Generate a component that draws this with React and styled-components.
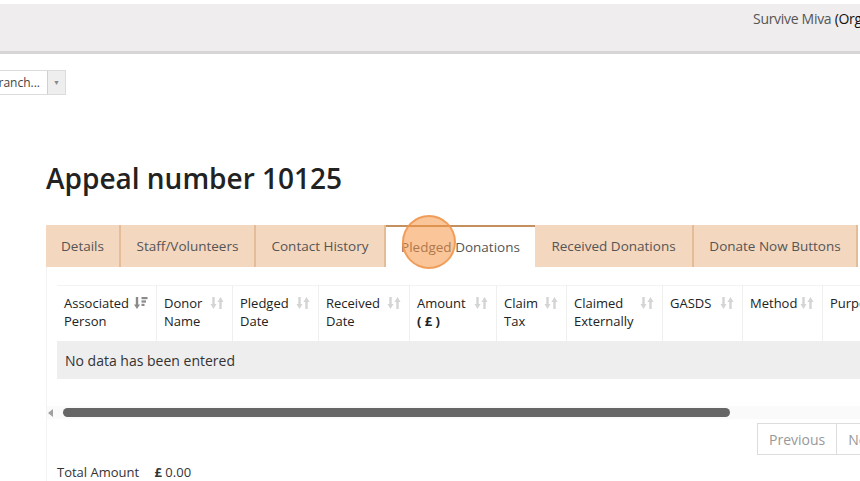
import styled, { createGlobalStyle } from "styled-components";

const GlobalStyle = createGlobalStyle`
    body {
        margin: 0;
        overflow: hidden;
        background: #fff;
        font-family: "Open Sans", "Liberation Sans", sans-serif;
        color: #333;
    }
`;

const columns = [
    { label: ["Associated", "Person"], width: 99, active: true },
    { label: ["Donor", "Name"], width: 75 },
    { label: ["Pledged", "Date"], width: 85 },
    { label: ["Received", "Date"], width: 90 },
    { label: ["Amount", "( £ )"], width: 86, bold: true },
    { label: ["Claim", "Tax"], width: 69 },
    { label: ["Claimed", "Externally"], width: 95 },
    { label: ["GASDS"], width: 79 },
    { label: ["Method"], width: 79 },
    { label: ["Purpose"], width: 89 },
];

const tabs = [
    { label: "Details", width: 75 },
    { label: "Staff/Volunteers", width: 135 },
    { label: "Contact History", width: 130 },
    { label: "Pledged Donations", width: 149, active: true },
    { label: "Received Donations", width: 159 },
    { label: "Donate Now Buttons", width: 164 },
];

const SortIcon = ({ active }) =>
    active ? (
        <svg width="14" height="14" viewBox="0 0 14 14">
            <path d="M3 1v9" stroke="#8a8a8a" strokeWidth="2.4" />
            <path d="M0 8.5h6L3 13z" fill="#8a8a8a" />
            <rect x="7.5" y="1" width="6" height="2.2" fill="#8a8a8a" />
            <rect x="7.5" y="4.4" width="4.5" height="2.2" fill="#8a8a8a" />
            <rect x="7.5" y="7.8" width="3" height="2.2" fill="#8a8a8a" />
        </svg>
    ) : (
        <svg width="14" height="14" viewBox="0 0 14 14">
            <path d="M3.5 1v8" stroke="#d4d4d4" strokeWidth="2.4" />
            <path d="M0.5 8h6l-3 5z" fill="#d4d4d4" />
            <path d="M10.5 13V5" stroke="#d4d4d4" strokeWidth="2.4" />
            <path d="M7.5 6h6l-3-5z" fill="#d4d4d4" />
        </svg>
    );

const App = () => {
    return (
        <>
            <GlobalStyle />
            <Header>
                <UserName>
                    Survive Miva <strong>(Organisation)</strong>
                </UserName>
            </Header>

            <BranchSelect>
                <SelectText>Select Branch...</SelectText>
                <SelectArrow>▼</SelectArrow>
            </BranchSelect>

            <Main>
                <Title>Appeal number 10125</Title>

                <TabBar>
                    {tabs.map((t) => (
                        <Tab key={t.label} $active={t.active} $width={t.width}>
                            {t.label}
                            {t.active && <ClickMarker />}
                        </Tab>
                    ))}
                </TabBar>

                <Panel>
                    <TableWrap>
                        <Table>
                            <thead>
                                <tr>
                                    {columns.map((c) => (
                                        <Th key={c.label[0]} $width={c.width}>
                                            <HeadCell>
                                                <span>
                                                    {c.label[0]}
                                                    {c.label[1] && <br />}
                                                    {c.bold ? <b>{c.label[1]}</b> : c.label[1]}
                                                </span>
                                                <SortIcon active={c.active} />
                                            </HeadCell>
                                        </Th>
                                    ))}
                                </tr>
                            </thead>
                            <tbody>
                                <tr>
                                    <EmptyCell colSpan={columns.length}>No data has been entered</EmptyCell>
                                </tr>
                            </tbody>
                        </Table>
                    </TableWrap>

                    <ScrollBar>
                        <ScrollArrow />
                        <ScrollThumb />
                    </ScrollBar>

                    <Pagination>
                        <PageButton>Previous</PageButton>
                        <PageButton>Next</PageButton>
                    </Pagination>

                    <Total>
                        Total Amount <TotalValue><b>£</b> 0.00</TotalValue>
                    </Total>
                </Panel>
            </Main>
        </>
    );
};

export default App;

// ================== STYLES ==================
const Header = styled.div`
    margin-top: 4px;
    height: 47px;
    background: #efeded;
    border-bottom: 3px solid #d7d5d5;
    padding-left: 753px;
    overflow: hidden;
    white-space: nowrap;
`;

const UserName = styled.div`
    padding-top: 5px;
    font-size: 14px;
    color: #555;
    letter-spacing: -0.3px;

    strong {
        font-weight: 400;
        color: #111;
    }
`;

const BranchSelect = styled.div`
    margin-top: 16px;
    width: 66px;
    height: 25px;
    display: flex;
    box-sizing: border-box;
    border: 1px solid #dcdcdc;
    border-left: none;
`;

const SelectText = styled.div`
    flex: 1;
    display: flex;
    justify-content: flex-end;
    align-items: center;
    overflow: hidden;
    white-space: nowrap;
    font-size: 12px;
    color: #444;
    padding-right: 7px;
`;

const SelectArrow = styled.div`
    width: 17px;
    display: flex;
    align-items: center;
    justify-content: center;
    background: #eeeeee;
    border-left: 1px solid #d0d0d0;
    font-size: 7px;
    color: #888;
`;

const Main = styled.div`
    padding-left: 46px;
`;

const Title = styled.h1`
    margin: 64px 0 0;
    font-size: 28px;
    font-weight: 600;
    color: #222;
    line-height: 38px;
`;

const TabBar = styled.div`
    margin-top: 28px;
    display: flex;
    height: 42px;
    white-space: nowrap;
`;

const Tab = styled.div`
    position: relative;
    flex: 0 0 ${(p) => p.$width}px;
    display: flex;
    align-items: center;
    justify-content: center;
    font-size: 13.5px;
    color: #555;
    background: ${(p) => (p.$active ? "#fff" : "#f4d7bf")};
    border-right: ${(p) => (p.$active ? "none" : "2px solid #e4bc98")};
    border-top: ${(p) => (p.$active ? "2px solid #c4915e" : "none")};
    box-sizing: border-box;
`;

const ClickMarker = styled.span`
    position: absolute;
    left: 16px;
    top: -12px;
    width: 54px;
    height: 54px;
    border-radius: 50%;
    background: rgba(245, 150, 70, 0.55);
    border: 2px solid rgba(240, 150, 80, 0.85);
    box-sizing: border-box;
`;

const Panel = styled.div`
    border-left: 1px solid #f3f3f3;
    padding: 18px 0 0 10px;
`;

const TableWrap = styled.div`
    overflow: hidden;
`;

const Table = styled.table`
    border-collapse: collapse;
    table-layout: fixed;
    width: 846px;
`;

const Th = styled.th`
    width: ${(p) => p.$width}px;
    height: 55px;
    padding: 0;
    vertical-align: top;
    text-align: left;
    font-weight: 400;
    border-right: 1px solid #efefef;
    border-top: 1px solid #f3f3f3;
`;

const HeadCell = styled.div`
    display: flex;
    justify-content: space-between;
    align-items: flex-start;
    padding: 8px 8px 0 7px;
    font-size: 13px;
    line-height: 18px;
    color: #222;

    svg {
        margin-top: 2px;
        flex-shrink: 0;
    }
`;

const EmptyCell = styled.td`
    height: 38px;
    padding: 0 8px;
    background: #eeeeee;
    font-size: 14px;
    color: #333;
`;

const ScrollBar = styled.div`
    margin: 27px 0 0 -10px;
    height: 13px;
    display: flex;
    align-items: center;
    background: #fafafa;
`;

const ScrollArrow = styled.span`
    width: 0;
    height: 0;
    margin: 0 10px 0 1px;
    border-top: 4px solid transparent;
    border-bottom: 4px solid transparent;
    border-right: 5px solid #a0a0a0;
`;

const ScrollThumb = styled.span`
    width: 667px;
    height: 9px;
    border-radius: 5px;
    background: #666;
`;

const Pagination = styled.div`
    margin: 4px 0 0 700px;
    display: flex;
    white-space: nowrap;
`;

const PageButton = styled.div`
    height: 32px;
    box-sizing: border-box;
    padding: 0 11px;
    display: flex;
    align-items: center;
    border: 1px solid #ddd;
    margin-right: -1px;
    font-size: 14px;
    color: #999;
`;

const Total = styled.div`
    margin-top: 8px;
    font-size: 13px;
    color: #333;
    white-space: nowrap;
`;

const TotalValue = styled.span`
    margin-left: 12px;

    b {
        font-weight: 700;
    }
`;
